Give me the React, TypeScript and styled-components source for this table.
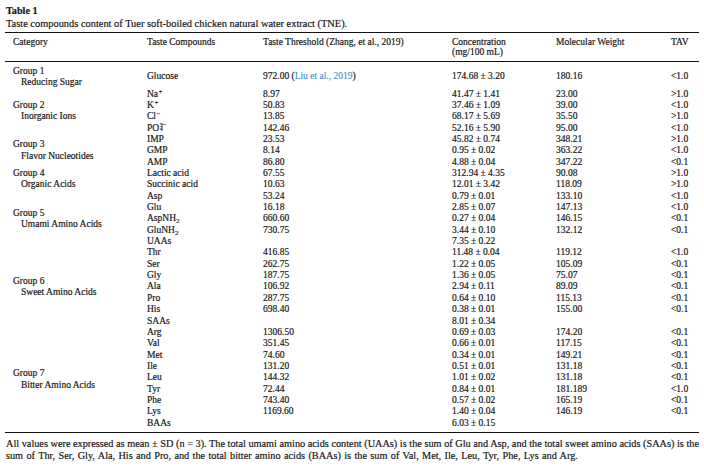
import React from "react";
import styled, { createGlobalStyle } from "styled-components";

const Global = createGlobalStyle`
  html, body { margin: 0; padding: 0; background: #ffffff; }
  body {
    font-family: "Liberation Serif", "Times New Roman", serif;
    color: #141414;
    -webkit-text-stroke: 0.18px #141414;
  }
`;

const Page = styled.div`
  width: 694px;
  padding: 4px 5px 0 5px;
`;

const Title = styled.div`
  font-weight: bold;
  font-size: 10.2px;
  line-height: 13px;
  padding-left: 1px;
`;

const Caption = styled.div`
  font-size: 10.4px;
  line-height: 13px;
  padding-left: 1px;
`;

const Table = styled.table`
  margin-top: 2px;
  width: 694px;
  table-layout: fixed;
  border-collapse: collapse;
  border-top: 1px solid #111;
  border-bottom: 1px solid #111;
  font-size: 9.5px;
`;

const Th = styled.th`
  text-align: left;
  font-weight: normal;
  vertical-align: top;
  padding: 5px 0 4px 8px;
  line-height: 9.6px;
  border-bottom: 1px solid #111;
  white-space: nowrap;
`;

const Td = styled.td<{ $top?: boolean; $bottom?: boolean }>`
  padding: ${(p) => (p.$top ? "3.5px" : "0")} 0 ${(p) => (p.$bottom ? "3.5px" : "0")} 8px;
  line-height: 11.34px;
  height: 11.34px;
  vertical-align: middle;
  white-space: nowrap;
`;

const GroupName = styled.div`
  line-height: 11.4px;
`;

const GroupSub = styled.div`
  line-height: 11.4px;
  padding-left: 8px;
`;

const Sup = styled.sup`
  font-size: 0.74em;
  line-height: 0;
  vertical-align: 0.42em;
  margin-left: 0.5px;
`;

const Sub = styled.sub`
  font-size: 0.74em;
  line-height: 0;
  vertical-align: -0.22em;
`;

const StackSub = styled.sub`
  font-size: 0.66em;
  line-height: 0;
  vertical-align: -0.15em;
  margin-left: 0.5px;
`;

const StackSup = styled.sup`
  font-size: 0.66em;
  line-height: 0;
  vertical-align: 0.5em;
  margin-left: -0.5em;
`;

const Link = styled.span`
  color: #3d8ccb;
  -webkit-text-stroke: 0.1px #3d8ccb;
`;

const Note = styled.div<{ $justify?: boolean }>`
  font-size: 10.25px;
  line-height: 12px;
  padding-left: 1px;
  text-align: ${(p) => (p.$justify ? "justify" : "left")};
  text-align-last: ${(p) => (p.$justify ? "justify" : "auto")};
  white-space: ${(p) => (p.$justify ? "normal" : "nowrap")};
  word-spacing: ${(p) => (p.$justify ? "0" : "0.8px")};
`;

const Notes = styled.div`
  margin-top: 5px;
`;

type Row = [React.ReactNode, React.ReactNode, string, string, string];
type Group = { name: string; sub: string; rows: Row[] };

const pm = (a: string, b: string) => `${a} \u00B1 ${b}`;

const groups: Group[] = [
  {
    name: "Group 1",
    sub: "Reducing Sugar",
    rows: [
      [
        "Glucose",
        <>
          972.00 (<Link>Liu et al., 2019</Link>)
        </>,
        pm("174.68", "3.20"),
        "180.16",
        "<1.0",
      ],
    ],
  },
  {
    name: "Group 2",
    sub: "Inorganic Ions",
    rows: [
      [<>Na<Sup>+</Sup></>, "8.97", pm("41.47", "1.41"), "23.00", ">1.0"],
      [<>K<Sup>+</Sup></>, "50.83", pm("37.46", "1.09"), "39.00", "<1.0"],
      [<>Cl<Sup>−</Sup></>, "13.85", pm("68.17", "5.69"), "35.50", ">1.0"],
      [
        <>
          PO<StackSub>4</StackSub>
          <StackSup>3−</StackSup>
        </>,
        "142.46",
        pm("52.16", "5.90"),
        "95.00",
        "<1.0",
      ],
    ],
  },
  {
    name: "Group 3",
    sub: "Flavor Nucleotides",
    rows: [
      ["IMP", "23.53", pm("45.82", "0.74"), "348.21", ">1.0"],
      ["GMP", "8.14", pm("0.95", "0.02"), "363.22", "<1.0"],
      ["AMP", "86.80", pm("4.88", "0.04"), "347.22", "<0.1"],
    ],
  },
  {
    name: "Group 4",
    sub: "Organic Acids",
    rows: [
      ["Lactic acid", "67.55", pm("312.94", "4.35"), "90.08", ">1.0"],
      ["Succinic acid", "10.63", pm("12.01", "3.42"), "118.09", ">1.0"],
    ],
  },
  {
    name: "Group 5",
    sub: "Umami Amino Acids",
    rows: [
      ["Asp", "53.24", pm("0.79", "0.01"), "133.10", "<1.0"],
      ["Glu", "16.18", pm("2.85", "0.07"), "147.13", "<1.0"],
      [<>AspNH<Sub>2</Sub></>, "660.60", pm("0.27", "0.04"), "146.15", "<0.1"],
      [<>GluNH<Sub>2</Sub></>, "730.75", pm("3.44", "0.10"), "132.12", "<0.1"],
      ["UAAs", "", pm("7.35", "0.22"), "", ""],
    ],
  },
  {
    name: "Group 6",
    sub: "Sweet Amino Acids",
    rows: [
      ["Thr", "416.85", pm("11.48", "0.04"), "119.12", "<1.0"],
      ["Ser", "262.75", pm("1.22", "0.05"), "105.09", "<0.1"],
      ["Gly", "187.75", pm("1.36", "0.05"), "75.07", "<0.1"],
      ["Ala", "106.92", pm("2.94", "0.11"), "89.09", "<0.1"],
      ["Pro", "287.75", pm("0.64", "0.10"), "115.13", "<0.1"],
      ["His", "698.40", pm("0.38", "0.01"), "155.00", "<0.1"],
      ["SAAs", "", pm("8.01", "0.34"), "", ""],
    ],
  },
  {
    name: "Group 7",
    sub: "Bitter Amino Acids",
    rows: [
      ["Arg", "1306.50", pm("0.69", "0.03"), "174.20", "<0.1"],
      ["Val", "351.45", pm("0.66", "0.01"), "117.15", "<0.1"],
      ["Met", "74.60", pm("0.34", "0.01"), "149.21", "<0.1"],
      ["Ile", "131.20", pm("0.51", "0.01"), "131.18", "<0.1"],
      ["Leu", "144.32", pm("1.01", "0.02"), "131.18", "<0.1"],
      ["Tyr", "72.44", pm("0.84", "0.01"), "181.189", "<1.0"],
      ["Phe", "743.40", pm("0.57", "0.02"), "165.19", "<0.1"],
      ["Lys", "1169.60", pm("1.40", "0.04"), "146.19", "<0.1"],
      ["BAAs", "", pm("6.03", "0.15"), "", ""],
    ],
  },
];

export default function App() {
  return (
    <Page>
      <Global />
      <Title>Table 1</Title>
      <Caption>Taste compounds content of Tuer soft-boiled chicken natural water extract (TNE).</Caption>
      <Table>
        <colgroup>
          <col style={{ width: 134 }} />
          <col style={{ width: 116 }} />
          <col style={{ width: 189 }} />
          <col style={{ width: 104 }} />
          <col style={{ width: 115 }} />
          <col style={{ width: 36 }} />
        </colgroup>
        <thead>
          <tr>
            <Th>Category</Th>
            <Th>Taste Compounds</Th>
            <Th>Taste Threshold (Zhang, et al., 2019)</Th>
            <Th>
              Concentration
              <br />
              (mg/100 mL)
            </Th>
            <Th>Molecular Weight</Th>
            <Th>TAV</Th>
          </tr>
        </thead>
        <tbody>
          {groups.map((g, gi) =>
            g.rows.map((r, ri) => {
              const top = gi === 0 && ri === 0;
              const bottom = gi === groups.length - 1 && ri === g.rows.length - 1;
              return (
                <tr key={`${gi}-${ri}`}>
                  {ri === 0 && (
                    <Td rowSpan={g.rows.length} $top={top}>
                      <GroupName>{g.name}</GroupName>
                      <GroupSub>{g.sub}</GroupSub>
                    </Td>
                  )}
                  {r.map((c, ci) => (
                    <Td key={ci} $top={top} $bottom={bottom}>
                      {c}
                    </Td>
                  ))}
                </tr>
              );
            })
          )}
        </tbody>
      </Table>
      <Notes>
        <Note $justify>
          All values were expressed as mean ± SD (n = 3). The total umami amino acids content (UAAs) is the sum of Glu and
          Asp, and the total sweet amino acids (SAAs) is the
        </Note>
        <Note>
          sum of Thr, Ser, Gly, Ala, His and Pro, and the total bitter amino acids (BAAs) is the sum of Val, Met, Ile, Leu,
          Tyr, Phe, Lys and Arg.
        </Note>
      </Notes>
    </Page>
  );
}
